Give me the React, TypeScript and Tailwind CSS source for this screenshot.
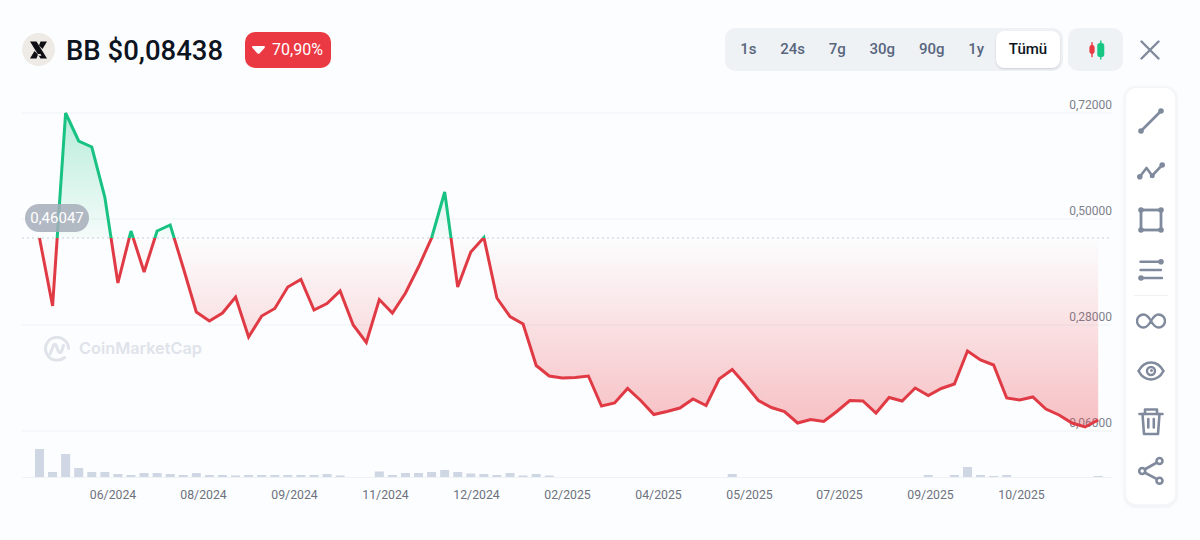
const ys = [
  238, 306, 113, 141, 147, 197, 283, 231, 272, 231, 225, 268, 312, 321, 313, 297, 337, 316, 308.5, 287, 279.5, 310, 303.5,
  291, 325, 342.5, 299.5, 313, 293, 267, 238, 192, 287, 252, 237.5, 298, 316.5, 324, 365.5, 376, 378, 377.5, 376, 406, 403,
  388.5, 400.5, 414.5, 411.5, 408, 399, 405.5, 379, 369.5, 384.5, 400.5, 407.5, 411.5, 423, 419.5, 421.5, 411.5, 400.5,
  401, 413, 397.5, 401, 388, 395.5, 388.5, 384, 351, 360, 365, 398, 400, 397, 409, 415, 423, 427, 420,
];

const vols: Record<number, number> = {
  0: 28, 1: 5, 2: 23, 3: 9, 4: 5, 5: 5, 6: 3, 7: 2, 8: 4, 9: 4, 10: 3, 11: 2, 12: 4, 13: 2, 14: 2, 15: 1.5, 16: 2, 17: 2,
  18: 2, 19: 2, 20: 2, 21: 2, 22: 3, 23: 1.5, 26: 5.5, 27: 2, 28: 4, 29: 4, 30: 5, 31: 7, 32: 5, 33: 3.5, 34: 3, 35: 2,
  36: 4, 37: 1.5, 38: 3, 39: 1.5, 53: 3, 68: 2, 70: 2, 71: 10, 72: 2, 73: 1, 74: 2, 81: 1,
};

const xAt = (i: number) => 39.5 + i * 13.07;
const linePts = ys.map((y, i) => `${xAt(i).toFixed(1)},${y}`).join(" ");
const areaPts = `${xAt(0)},238 ${linePts} ${xAt(81).toFixed(1)},238`;

const grid = [
  { y: 113, label: "0,72000" },
  { y: 219, label: "0,50000" },
  { y: 325, label: "0,28000" },
  { y: 431, label: "0,06000" },
];

const months = [
  { x: 113, t: "06/2024" },
  { x: 203.5, t: "08/2024" },
  { x: 294.5, t: "09/2024" },
  { x: 385.5, t: "11/2024" },
  { x: 476.5, t: "12/2024" },
  { x: 567.5, t: "02/2025" },
  { x: 658.5, t: "04/2025" },
  { x: 749.5, t: "05/2025" },
  { x: 839.5, t: "07/2025" },
  { x: 930.5, t: "09/2025" },
  { x: 1021.5, t: "10/2025" },
];

const ranges = ["1s", "24s", "7g", "30g", "90g", "1y"];

function Chart() {
  return (
    <svg width="1124" height="431" viewBox="0 86 1124 431" className="block shrink-0">
      <defs>
        <linearGradient id="redFill" gradientUnits="userSpaceOnUse" x1="0" y1="238" x2="0" y2="431">
          <stop offset="0" stopColor="#ea3943" stopOpacity="0" />
          <stop offset="1" stopColor="#ea3943" stopOpacity="0.32" />
        </linearGradient>
        <linearGradient id="greenFill" gradientUnits="userSpaceOnUse" x1="0" y1="238" x2="0" y2="113">
          <stop offset="0" stopColor="#16c784" stopOpacity="0.03" />
          <stop offset="1" stopColor="#16c784" stopOpacity="0.3" />
        </linearGradient>
        <clipPath id="above">
          <rect x="0" y="86" width="1124" height="152" />
        </clipPath>
        <clipPath id="below">
          <rect x="0" y="238" width="1124" height="300" />
        </clipPath>
      </defs>

      {grid.map((g) => (
        <g key={g.y}>
          <line x1="22" x2="1112" y1={g.y} y2={g.y} stroke="#eff2f5" strokeWidth="1" />
          <text x="1112" y={g.y - 4} textAnchor="end" fontSize="12" fill="#7c818c">
            {g.label}
          </text>
        </g>
      ))}

      <line x1="22" x2="1112" y1="477.5" y2="477.5" stroke="#eff2f5" strokeWidth="1" />

      <polygon points={areaPts} fill="url(#redFill)" clipPath="url(#below)" />
      <polygon points={areaPts} fill="url(#greenFill)" clipPath="url(#above)" />
      <line x1="22" x2="1112" y1="238" y2="238" stroke="#c5ccd8" strokeWidth="1" strokeDasharray="2 3" />
      <polyline points={linePts} fill="none" stroke="#e03a45" strokeWidth="3" strokeMiterlimit="3" clipPath="url(#below)" />
      <polyline points={linePts} fill="none" stroke="#18c283" strokeWidth="3" strokeMiterlimit="3" clipPath="url(#above)" />

      {Object.entries(vols).map(([i, h]) => (
        <rect key={i} x={xAt(Number(i)) - 4.5} y={477 - h} width="9" height={h} fill="#cfd6e4" />
      ))}

      {months.map((m) => (
        <text key={m.t} x={m.x} y="499" textAnchor="middle" fontSize="12.25" fill="#6d727d">
          {m.t}
        </text>
      ))}

      <g stroke="#dfe3ea" fill="none" strokeWidth="3" strokeLinecap="round" strokeLinejoin="round">
        <path d="M64.500 357.500a11.500 11.500 0 1 1 4-9" />
        <path d="M50 354l3.500-8.500c.8-1.600 2-1.600 2.700 0l2.300 6c.8 1.800 2.200 1.800 3 0l2-6" />
      </g>
      <text x="79" y="354" fontSize="16.300" fontWeight="600" fill="#dfe3ea" className="font-['Inter',sans-serif]">
        CoinMarketCap
      </text>
    </svg>
  );
}

function Sidebar() {
  return (
    <div className="w-[53px] h-[420px] shrink-0 flex flex-col items-center rounded-[12px] border-2 border-[#f4f6f8] bg-white pt-[18px] text-[#808a9d] shadow-[0_1px_3px_rgba(88,102,126,0.10)]">
      <svg width="30" height="30" viewBox="0 0 30 30" fill="none" stroke="currentColor" strokeWidth="2.6">
        <line x1="5" y1="25" x2="25" y2="5" />
        <circle cx="5" cy="25" r="2.800" fill="currentColor" stroke="none" />
        <circle cx="25" cy="5" r="2.800" fill="currentColor" stroke="none" />
      </svg>
      <svg className="mt-[23px]" width="30" height="24" viewBox="0 0 30 24" fill="none" stroke="currentColor" strokeWidth="2.600" strokeLinejoin="round">
        <path d="M3.800 17.700L10.500 9l5.700 7.700L26.200 6" />
        <circle cx="3.800" cy="17.700" r="2.800" fill="currentColor" stroke="none" />
        <circle cx="16.200" cy="16.700" r="2.500" fill="currentColor" stroke="none" />
        <circle cx="26.200" cy="6" r="2.800" fill="currentColor" stroke="none" />
      </svg>
      <svg className="mt-[22px]" width="30" height="30" viewBox="0 0 30 30" fill="none" stroke="currentColor" strokeWidth="2.800">
        <rect x="5" y="5" width="20" height="20" />
        <circle cx="5" cy="5" r="2.800" fill="currentColor" stroke="none" />
        <circle cx="25" cy="5" r="2.800" fill="currentColor" stroke="none" />
        <circle cx="5" cy="25" r="2.800" fill="currentColor" stroke="none" />
        <circle cx="25" cy="25" r="2.800" fill="currentColor" stroke="none" />
      </svg>
      <svg className="mt-[23px]" width="30" height="24" viewBox="0 0 30 24" fill="none" stroke="currentColor" strokeWidth="2.400" strokeLinecap="round">
        <line x1="4.500" y1="3.700" x2="25" y2="3.700" />
        <line x1="4.500" y1="12" x2="25" y2="12" />
        <line x1="5" y1="20" x2="26" y2="20" />
        <circle cx="25" cy="3.700" r="2.800" fill="currentColor" stroke="none" />
        <circle cx="5" cy="20" r="2.800" fill="currentColor" stroke="none" />
      </svg>
      <div className="mt-[13px] h-px w-[34px] bg-[#eff2f5]" />
      <svg className="mt-[16px]" width="30" height="18" viewBox="0 0 30 18" fill="none" stroke="currentColor" strokeWidth="2.400">
        <path d="M15 9C13 5.500 11 2.500 7.500 2.500a6.500 6.500 0 0 0 0 13c3.500 0 5.500-3 7.500-6.500s4-6.500 7.500-6.500a6.500 6.500 0 0 1 0 13c-3.500 0-5.500-3-7.500-6.500z" />
      </svg>
      <svg className="mt-[29px]" width="30" height="24" viewBox="0 0 30 24" fill="none" stroke="currentColor" strokeWidth="2.600">
        <path d="M2.500 12C5.500 6.500 9.500 3.500 15 3.500s9.500 3 12.500 8.500c-3 5.500-7 8.500-12.500 8.500S5.500 17.500 2.500 12z" />
        <circle cx="15" cy="12" r="4" strokeWidth="2.400" />
        <circle cx="15.500" cy="11.500" r="1.500" fill="currentColor" stroke="none" />
      </svg>
      <svg className="mt-[23px]" width="30" height="30" viewBox="0 0 30 30" fill="none" stroke="currentColor" strokeWidth="2.600" strokeLinecap="round" strokeLinejoin="round">
        <path d="M3.500 8h23" />
        <path d="M9 8V3.500h12V8" />
        <path d="M6.500 8l1.500 20h14l1.500-20" />
        <path d="M12.300 13v8.500M17.800 13v8.500" />
      </svg>
      <svg className="mt-[20px]" width="30" height="30" viewBox="0 0 30 30" fill="none" stroke="currentColor" strokeWidth="2.600">
        <line x1="8.500" y1="13.500" x2="21" y2="6.500" />
        <line x1="8.500" y1="16.500" x2="21" y2="23.200" />
        <circle cx="23.500" cy="5" r="3" fill="#fff" />
        <circle cx="6.200" cy="15" r="3" fill="#fff" />
        <circle cx="23.500" cy="24.700" r="3" fill="#fff" />
      </svg>
    </div>
  );
}

export default function App() {
  return (
    <div className="relative w-[1200px] h-[540px] overflow-hidden bg-[#fcfdfe] font-['Roboto',sans-serif]">
      <div className="flex items-center h-[86px] pt-[13px] pl-[22px] pr-[40px]">
        <div className="w-[33px] h-[33px] rounded-full bg-[#eeebe6] flex items-center justify-center">
          <svg width="19" height="18" viewBox="0 0 19 18" fill="#0d0f14">
            <path d="M1 0.500h6.500L18 17.500h-6.500z" />
            <path d="M11.500 0.500H18L13.500 8 10 4.500z" />
            <path d="M1 17.500L5.500 10l3.500 3.500-1.500 4z" />
            <path d="M8.500 13h3l1 1.800h-3z" fill="#eeebe6" />
          </svg>
        </div>
        <div className="ml-[11px] mt-[2px] w-[158px] whitespace-nowrap text-[27.5px] leading-none font-[480] text-[#0d1421]">BB $0,08438</div>
        <div className="ml-[21px] h-[36px] w-[86px] rounded-[10px] bg-[#ea3943] flex items-center justify-center gap-[7px] text-white text-[16px] font-[450] pr-[1px]">
          <svg width="13" height="8" viewBox="0 0 13 8" fill="#fff">
            <path d="M1.300 0h10.400c1 0 1.600 1 1 1.800L7.500 7.400c-.5.6-1.500.6-2 0L.3 1.800C-.3 1 .3 0 1.300 0z" />
          </svg>
          70,90%
        </div>
        <div className="ml-auto h-[43px] rounded-[10px] bg-[#eff2f5] flex items-start p-[3px] text-[15px] font-[480] text-[#58667e]">
          {ranges.map((r) => (
            <div key={r} className="h-[37px] px-[11.9px] flex items-center">
              {r}
            </div>
          ))}
          <div className="h-[37px] w-[64px] rounded-[8px] bg-white text-[#0d1421] font-medium flex items-center justify-center shadow-[0_1px_2px_rgba(88,102,126,0.25)]">
            Tümü
          </div>
        </div>
        <div className="ml-[5px] w-[55px] h-[43px] rounded-[10px] bg-[#eff2f5] flex items-center justify-center">
          <svg width="18" height="20" viewBox="0 0 18 20">
            <rect x="4.300" y="2.200" width="1.400" height="15" fill="#ea3943" />
            <rect x="2.400" y="5" width="5.200" height="9" rx="2.400" fill="#ea3943" />
            <rect x="13.100" y="0.500" width="1.400" height="19" fill="#16c784" />
            <rect x="10.300" y="3" width="7" height="14" rx="2.800" fill="#16c784" />
          </svg>
        </div>
        <svg className="ml-[17px]" width="20" height="20" viewBox="0 0 20 20" fill="none" stroke="#808a9d" strokeWidth="2.400" strokeLinecap="round">
          <line x1="1.500" y1="1.500" x2="18.500" y2="18.500" />
          <line x1="18.500" y1="1.500" x2="1.500" y2="18.500" />
        </svg>
      </div>

      <div className="flex items-start">
        <Chart />
        <Sidebar />
      </div>

      <div className="absolute left-[25px] top-[204px] h-[28px] w-[64px] rounded-full bg-[#a6adba]/85 flex items-center justify-center text-white text-[15px]">
        0,46047
      </div>
    </div>
  );
}
